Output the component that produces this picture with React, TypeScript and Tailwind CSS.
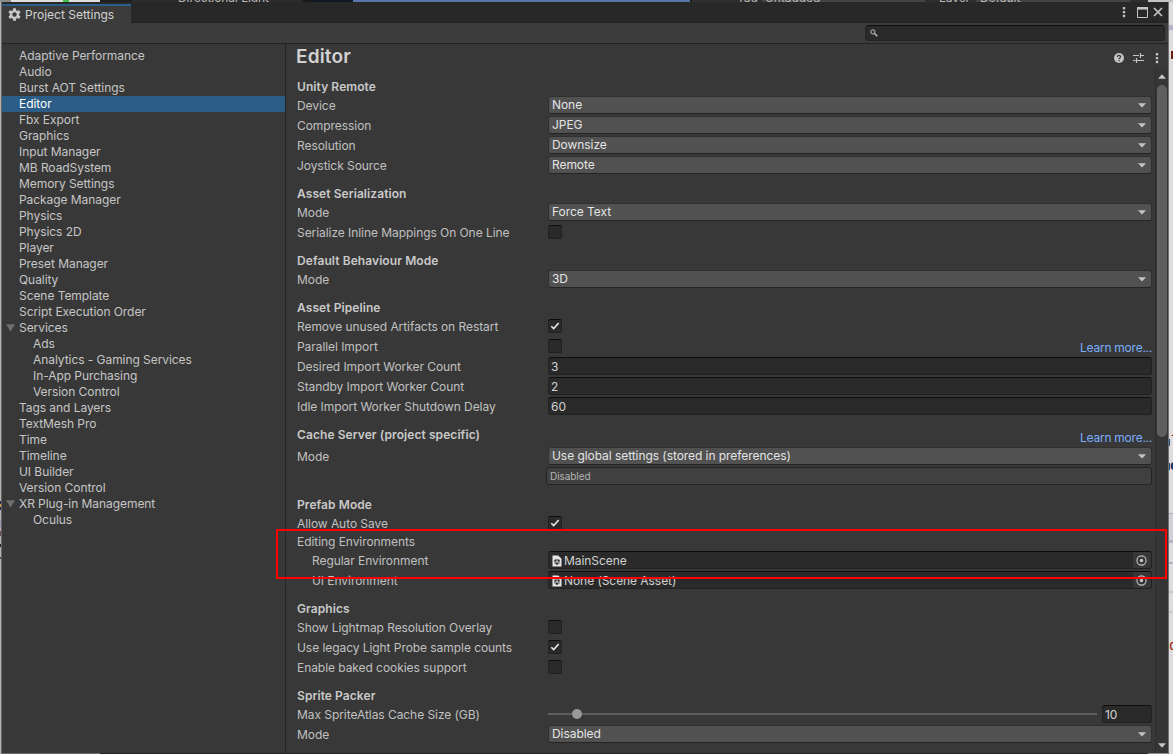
import React from "react";

type NavItem = { label: string; child?: boolean; open?: boolean; active?: boolean };

const nav: NavItem[] = [
  { label: "Adaptive Performance" },
  { label: "Audio" },
  { label: "Burst AOT Settings" },
  { label: "Editor", active: true },
  { label: "Fbx Export" },
  { label: "Graphics" },
  { label: "Input Manager" },
  { label: "MB RoadSystem" },
  { label: "Memory Settings" },
  { label: "Package Manager" },
  { label: "Physics" },
  { label: "Physics 2D" },
  { label: "Player" },
  { label: "Preset Manager" },
  { label: "Quality" },
  { label: "Scene Template" },
  { label: "Script Execution Order" },
  { label: "Services", open: true },
  { label: "Ads", child: true },
  { label: "Analytics - Gaming Services", child: true },
  { label: "In-App Purchasing", child: true },
  { label: "Version Control", child: true },
  { label: "Tags and Layers" },
  { label: "TextMesh Pro" },
  { label: "Time" },
  { label: "Timeline" },
  { label: "UI Builder" },
  { label: "Version Control" },
  { label: "XR Plug-in Management", open: true },
  { label: "Oculus", child: true },
];

function Gear() {
  return (
    <svg width="13" height="13" viewBox="0 0 13 13" className="shrink-0">
      <g fill="#c8c8c8">
        <rect x="5" y="0.3" width="3" height="12.4" rx="0.5" />
        <rect x="5" y="0.3" width="3" height="12.4" rx="0.5" transform="rotate(60 6.5 6.5)" />
        <rect x="5" y="0.3" width="3" height="12.4" rx="0.5" transform="rotate(120 6.5 6.5)" />
        <circle cx="6.5" cy="6.5" r="4.6" />
      </g>
      <circle cx="6.5" cy="6.5" r="2.2" fill="#3c3c3c" />
    </svg>
  );
}

function Dots() {
  return (
    <svg width="4" height="12" viewBox="0 0 4 12" className="shrink-0" fill="#c4c4c4">
      <rect x="0.8" y="1" width="2.4" height="2.4" rx="0.6" />
      <rect x="0.8" y="4.9" width="2.4" height="2.4" rx="0.6" />
      <rect x="0.8" y="8.8" width="2.4" height="2.4" rx="0.6" />
    </svg>
  );
}

function Heading({ children, tall }: { children: string; tall?: boolean }) {
  return (
    <div className={`flex shrink-0 items-start justify-between pt-[9px] ${tall ? "h-[30px]" : "h-[27px]"}`}>
      <span className="pl-[1px] font-semibold leading-[18px] tracking-[0.08px] text-[#c9c9c9]">{children}</span>
      {tall && <span className="pt-[3px] leading-[18px] tracking-[-0.25px] text-[#7baefa]">Learn more...</span>}
    </div>
  );
}

function Row({ label, indent, children }: { label: string; indent?: boolean; children?: React.ReactNode }) {
  return (
    <div className="flex h-[20px] shrink-0 items-start">
      <span className={`w-[252px] shrink-0 whitespace-nowrap leading-[20px] ${indent ? "pl-[16px]" : "pl-[1px]"}`}>{label}</span>
      {children}
    </div>
  );
}

function Select({ value }: { value: string }) {
  return (
    <div className="flex h-[18px] flex-1 items-center justify-between rounded-[3px] border border-[#303030] border-b-[#242424] bg-[#515151] pl-[3px] pr-[5px] text-[#e4e4e4]">
      <span className="leading-[16px]">{value}</span>
      <svg width="8" height="5" viewBox="0 0 8 5">
        <path d="M0 0.3H8L4 4.6Z" fill="#c4c4c4" />
      </svg>
    </div>
  );
}

function Field({ value }: { value: string }) {
  return (
    <div className="h-[18px] flex-1 rounded-[3px] border border-[#212121] border-t-[#0d0d0d] bg-[#2a2a2a] pl-[2px] leading-[17px] text-[#d2d2d2]">
      {value}
    </div>
  );
}

function Check({ on }: { on?: boolean }) {
  return (
    <div className="mt-[2px] h-[14px] w-[14px] rounded-[2px] border border-[#212121] border-t-[#0d0d0d] bg-[#2a2a2a]">
      {on && (
        <svg width="12" height="12" viewBox="0 0 12 12">
          <path d="M2.3 6.2L4.7 8.6L9.7 3" fill="none" stroke="#e8e8e8" strokeWidth="1.6" />
        </svg>
      )}
    </div>
  );
}

function ObjectField({ value }: { value: string }) {
  return (
    <div className="flex h-[18px] flex-1 overflow-hidden rounded-[3px] border border-[#212121] border-t-[#0d0d0d] bg-[#2a2a2a]">
      <svg width="10" height="12" viewBox="0 0 10 12" className="ml-[3px] mt-[3px] shrink-0">
        <path d="M0.5 0.5H6.2L9.5 3.7V11.5H0.5Z" fill="#e6e6e6" />
        <path d="M5 3.6L7.8 5.2V8.6L5 10.2L2.2 8.6V5.2Z" fill="#8a8a8a" />
        <circle cx="3.3" cy="5.4" r="1" fill="#333333" />
        <circle cx="6.7" cy="5.4" r="1" fill="#333333" />
        <circle cx="5" cy="8.6" r="1.1" fill="#333333" />
        <circle cx="5" cy="6.8" r="0.7" fill="#e6e6e6" />
      </svg>
      <span className="ml-[2px] flex-1 leading-[17px] text-[#d2d2d2]">{value}</span>
      <span className="flex w-[18px] items-center justify-center bg-[#373737] pr-[1px]">
        <svg width="11" height="11" viewBox="0 0 11 11">
          <circle cx="5.5" cy="5.5" r="4.6" fill="none" stroke="#c4c4c4" strokeWidth="1.1" />
          <circle cx="5.5" cy="5.5" r="1.7" fill="#c4c4c4" />
        </svg>
      </span>
    </div>
  );
}

function BehindTop() {
  return (
    <div className="flex h-[2px] shrink-0 overflow-hidden whitespace-nowrap leading-[14px] text-[#b8b8b8]">
      <div className="w-[11px] bg-[#8c8c8c]" />
      <div className="w-[52px] bg-[#dedede]" />
      <div className="w-[6px] bg-[#3fc24a]" />
      <div className="w-[31px] bg-[#dedede]" />
      <div className="w-[32px] bg-[#1f1f1f]" />
      <div className="w-[171px] bg-[#2c2c2c] pl-[46px]">
        <div className="-mt-[9px]">Directional Light</div>
      </div>
      <div className="w-[7px] bg-[#191919]" />
      <div className="w-[43px] bg-[#101823]" />
      <div className="w-[337px] bg-[#5877a8]" />
      <div className="w-[2px] bg-[#191919]" />
      <div className="w-[70px] bg-[#2e2e2e] pl-[45px]">
        <div className="-mt-[9px]">Tag</div>
      </div>
      <div className="w-[163px] bg-[#444444] pl-[3px]">
        <div className="-mt-[9px]">Untagged</div>
      </div>
      <div className="w-[51px] bg-[#2e2e2e] pl-[14px]">
        <div className="-mt-[9px]">Layer</div>
      </div>
      <div className="w-[154px] bg-[#444444] pl-[4px]">
        <div className="-mt-[9px]">Default</div>
      </div>
      <div className="w-[18px] bg-[#2e2e2e]" />
      <div className="flex-1 bg-[#c4c4c4]" />
    </div>
  );
}

function BehindRight() {
  return (
    <div className="flex min-w-0 flex-1 flex-col overflow-hidden bg-[#dedcdf]">
      <div className="mt-[23px] h-[5px] shrink-0 bg-[#b3b2c4]" />
      <div className="ml-[2px] mt-[21px] h-[8px] shrink-0 bg-[#6e2008]" />
      <div className="mt-[371px] flex h-[24px] shrink-0 items-center font-['Liberation_Mono',monospace] text-[14px] text-[#6e2008]">
        <span className="h-[7px] w-[1px] shrink-0 bg-[#1d4f86]" />
        <span className="leading-[16px]">l</span>
      </div>
      <div className="flex h-[24px] shrink-0 items-center font-['Liberation_Mono',monospace] text-[14px] font-bold text-[#142c63]">
        <span className="h-[7px] w-[1px] shrink-0 bg-[#1d4f86]" />
        <span className="leading-[16px]">e</span>
      </div>
      <div className="mt-[35px] h-[1px] shrink-0 bg-[#aeaeb4]" />
      <div className="h-[26px] shrink-0 bg-[#d1cfd6]" />
      <div className="h-[3px] shrink-0 bg-[#b3b2c4]" />
      <div className="mt-[19px] h-[2px] shrink-0 bg-[#b3b2c4]" />
      <div className="mt-[27px] h-[2px] shrink-0 bg-[#c8c6ca]" />
      <div className="mt-[18px] h-[2px] shrink-0 bg-[#c8c6ca]" />
      <div className="mt-[24px] h-[18px] shrink-0 font-['Liberation_Mono',monospace] text-[14px] leading-[18px] text-[#9c2108]">d</div>
    </div>
  );
}

function BehindLeft() {
  return (
    <div className="flex w-[2px] shrink-0 flex-col border-r border-[#666666] bg-[#b4b4b4] pt-[499px]">
      <div className="h-[3px] bg-[#1c2a4a]" />
      <div className="h-[3px] bg-[#d8a24a]" />
      <div className="h-[3px] bg-[#1c2a4a]" />
      <div className="mt-[10px] h-[8px] bg-[#9a9ab0]" />
      <div className="mt-[3px] h-[5px] bg-[#6a4a60]" />
      <div className="mt-[8px] h-[3px] bg-[#222222]" />
      <div className="mt-[10px] h-[2px] bg-[#444444]" />
    </div>
  );
}

export default function App() {
  return (
    <div className="relative flex h-[754px] w-[1173px] flex-col overflow-hidden bg-[#dedcdf] font-['Inter',sans-serif] text-[12px] tracking-[-0.06px] text-[#c0c0c0]">
      <BehindTop />
      <div className="flex min-h-0 flex-1">
        <BehindLeft />
        <div className="flex w-[1166px] shrink-0 flex-col bg-[#383838]">
          <div className="flex h-[21px] shrink-0 items-stretch justify-between border-b border-[#232323] bg-[#282828]">
            <div className="mt-[2px] -mb-[1px] flex w-[129px] items-center gap-[4px] border-t-2 border-[#2c5d87] bg-[#3c3c3c] pl-[6px] tracking-[0px] text-[#d2d2d2]">
              <Gear />
              <span className="leading-[17px]">Project Settings</span>
            </div>
            <div className="flex items-center pr-[5px]">
              <Dots />
              <svg width="11" height="11" viewBox="0 0 11 11" className="ml-[11px]">
                <path d="M0.5 0.5H10.5V10.5H0.5Z" fill="none" stroke="#c4c4c4" strokeWidth="1" />
                <path d="M0 0H11V2.6H0Z" fill="#c4c4c4" />
              </svg>
              <svg width="10" height="10" viewBox="0 0 10 10" className="ml-[5px]">
                <path d="M1 1L9 9M9 1L1 9" stroke="#c4c4c4" strokeWidth="1.7" />
              </svg>
            </div>
          </div>
          <div className="flex h-[21px] shrink-0 items-start justify-end border-b border-[#232323] bg-[#3c3c3c] pr-[3px] pt-[2px]">
            <div className="flex h-[16px] w-[300px] items-center rounded-[4px] border border-[#212121] border-t-[#0d0d0d] bg-[#2a2a2a] pl-[4px]">
              <svg width="8" height="8" viewBox="0 0 8 8">
                <circle cx="2.9" cy="2.9" r="2.1" fill="none" stroke="#c4c4c4" strokeWidth="1" />
                <path d="M4.5 4.5L7.3 7.3" stroke="#c4c4c4" strokeWidth="1.3" />
              </svg>
            </div>
          </div>
          <div className="flex min-h-0 flex-1">
            <div className="flex w-[284px] shrink-0 flex-col border-r border-[#232323] pt-[4px]">
              {nav.map((n, i) => (
                <div
                  key={i}
                  className={`flex h-[16px] shrink-0 items-center leading-[16px] ${n.active ? "bg-[#2c5d87] text-white" : "text-[#c6c6c6]"} ${n.child ? "pl-[31px]" : n.open ? "pl-[4px]" : "pl-[17px]"}`}
                >
                  {n.open && (
                    <svg width="9" height="8" viewBox="0 0 9 8" className="mr-[4px]">
                      <path d="M0 0.3H9L4.5 7.8Z" fill="#6c6c6c" />
                    </svg>
                  )}
                  {n.label}
                </div>
              ))}
            </div>
            <div className="flex min-w-0 flex-1 flex-col">
              <div className="flex h-[25px] shrink-0 items-center justify-between pl-[10px] pr-[9px]">
                <h1 className="text-[19px] font-semibold leading-[25px] tracking-[0.15px] text-[#d2d2d2]">Editor</h1>
                <div className="flex items-center pt-[3px]">
                  <svg width="10" height="10" viewBox="0 0 10 10">
                    <circle cx="5" cy="5" r="5" fill="#c4c4c4" />
                    <path d="M3.4 3.9C3.4 1.9 6.6 1.9 6.6 3.8C6.6 5 5 4.9 5 6.2M5 7V8.2" fill="none" stroke="#383838" strokeWidth="1.2" />
                  </svg>
                  <svg width="11" height="10" viewBox="0 0 11 10" className="ml-[9px]">
                    <path d="M0 2.5H6M7.5 2.5H11M7.5 0V5M0 7.5H2.5M3.5 7.5H11M3.5 5V10" stroke="#c4c4c4" strokeWidth="1.2" />
                  </svg>
                  <span className="ml-[11px] flex">
                    <Dots />
                  </span>
                </div>
              </div>
              <div className="flex min-h-0 flex-1">
                <div className="flex min-w-0 flex-1 flex-col pl-[10px] pr-[3px]">
                  <Heading>Unity Remote</Heading>
                  <Row label="Device"><Select value="None" /></Row>
                  <Row label="Compression"><Select value="JPEG" /></Row>
                  <Row label="Resolution"><Select value="Downsize" /></Row>
                  <Row label="Joystick Source"><Select value="Remote" /></Row>
                  <Heading>Asset Serialization</Heading>
                  <Row label="Mode"><Select value="Force Text" /></Row>
                  <Row label="Serialize Inline Mappings On One Line"><Check /></Row>
                  <Heading>Default Behaviour Mode</Heading>
                  <Row label="Mode"><Select value="3D" /></Row>
                  <Heading>Asset Pipeline</Heading>
                  <Row label="Remove unused Artifacts on Restart"><Check on /></Row>
                  <Row label="Parallel Import">
                    <div className="flex flex-1 justify-between">
                      <Check />
                      <span className="leading-[22px] tracking-[-0.25px] text-[#7baefa]">Learn more...</span>
                    </div>
                  </Row>
                  <Row label="Desired Import Worker Count"><Field value="3" /></Row>
                  <Row label="Standby Import Worker Count"><Field value="2" /></Row>
                  <Row label="Idle Import Worker Shutdown Delay"><Field value="60" /></Row>
                  <Heading tall>Cache Server (project specific)</Heading>
                  <Row label="Mode"><Select value="Use global settings (stored in preferences)" /></Row>
                  <div className="ml-[250px] h-[18px] shrink-0 rounded-[3px] border border-[#232323] bg-[#404040] pl-[3px] text-[10px] leading-[17px] text-[#b4b4b4]">
                    Disabled
                  </div>
                  <div className="h-[2px] shrink-0" />
                  <Heading>Prefab Mode</Heading>
                  <Row label="Allow Auto Save"><Check on /></Row>
                  <div className="h-[17px] shrink-0 pl-[1px] leading-[15px]">Editing Environments</div>
                  <Row indent label="Regular Environment"><ObjectField value="MainScene" /></Row>
                  <Row indent label="UI Environment"><ObjectField value="None (Scene Asset)" /></Row>
                  <Heading>Graphics</Heading>
                  <Row label="Show Lightmap Resolution Overlay"><Check /></Row>
                  <Row label="Use legacy Light Probe sample counts"><Check on /></Row>
                  <Row label="Enable baked cookies support"><Check /></Row>
                  <Heading>Sprite Packer</Heading>
                  <Row label="Max SpriteAtlas Cache Size (GB)">
                    <div className="flex h-[18px] flex-1 items-center">
                      <div className="h-[2px] w-[24px] bg-[#5e5e5e]" />
                      <div className="h-[10px] w-[10px] rounded-full bg-[#999999]" />
                      <div className="mr-[5px] h-[2px] flex-1 bg-[#5e5e5e]" />
                      <div className="flex w-[50px]"><Field value="10" /></div>
                    </div>
                  </Row>
                  <Row label="Mode"><Select value="Disabled" /></Row>
                </div>
                <div className="flex w-[13px] shrink-0 flex-col items-center border-l border-[#2e2e2e] bg-[#353535] pb-[5px] pt-[5px]">
                  <svg width="8" height="5" viewBox="0 0 8 5" className="shrink-0">
                    <path d="M0 4.7H8L4 0.3Z" fill="#c4c4c4" />
                  </svg>
                  <div className="mt-[6px] h-[352px] w-[10px] shrink-0 rounded-full bg-[#5f5f5f]" />
                  <div className="flex-1" />
                  <svg width="8" height="5" viewBox="0 0 8 5" className="shrink-0">
                    <path d="M0 0.3H8L4 4.7Z" fill="#c4c4c4" />
                  </svg>
                </div>
              </div>
            </div>
          </div>
          <div className="flex h-[1px] shrink-0 bg-[#232323]">
            <div className="w-[98px] bg-[#6a6a6a]" />
            <div className="ml-auto w-[20px] bg-[#8a8a8a]" />
          </div>
        </div>
        <div className="w-[1px] shrink-0 bg-[#707070]" />
        <BehindRight />
      </div>
      <div className="pointer-events-none absolute left-[276px] top-[529px] h-[50px] w-[891px] border-2 border-[#fe0000]" />
    </div>
  );
}
